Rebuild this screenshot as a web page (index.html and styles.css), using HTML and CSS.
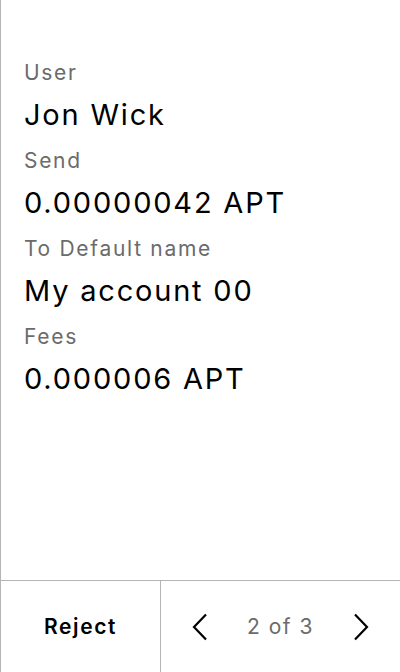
FILE: index.html
```html
<!DOCTYPE html>
<html>
<head>
<meta charset="utf-8">
<link rel="stylesheet" href="styles.css">
</head>
<body>
<div class="screen">
  <main class="fields">
    <div class="field">
      <div class="label">User</div>
      <div class="value">Jon Wick</div>
    </div>
    <div class="field">
      <div class="label">Send</div>
      <div class="value">0.00000042 APT</div>
    </div>
    <div class="field">
      <div class="label">To Default name</div>
      <div class="value">My account 00</div>
    </div>
    <div class="field">
      <div class="label">Fees</div>
      <div class="value">0.000006 APT</div>
    </div>
  </main>
  <footer class="footer">
    <div class="reject">Reject</div>
    <div class="pager">
      <svg class="chev" width="16" height="28" viewBox="0 0 16 28"><path d="M14 1.5 L2 14 L14 26.5" fill="none" stroke="#000" stroke-width="2.2"/></svg>
      <span class="count">2 of 3</span>
      <svg class="chev" width="16" height="28" viewBox="0 0 16 28"><path d="M2 1.5 L14 14 L2 26.5" fill="none" stroke="#000" stroke-width="2.2"/></svg>
    </div>
  </footer>
</div>
</body>
</html>
```
FILE: styles.css
```css
* { box-sizing: border-box; }
html, body { margin: 0; padding: 0; background: #fff; }
body {
  font-family: Inter, "Noto Sans", sans-serif;
  font-optical-sizing: none;
  color: #000;
}
.screen {
  width: 400px;
  height: 672px;
  border-left: 1px solid #b5b5b5;
  display: flex;
  flex-direction: column;
}
.fields {
  flex: 1;
  padding: 61px 0 0 23px;
  display: flex;
  flex-direction: column;
  gap: 17px;
}
.label {
  font-size: 21px;
  line-height: 24px;
  letter-spacing: 1.7px;
  color: #6b6b6b;
  margin-bottom: 13px;
}
.value {
  font-size: 29px;
  line-height: 34px;
  letter-spacing: 1.8px;
  color: #000;
}
.footer {
  height: 92px;
  border-top: 1px solid #b5b5b5;
  display: grid;
  grid-template-columns: 160px 1fr;
}
.reject {
  border-right: 1px solid #b5b5b5;
  display: flex;
  align-items: center;
  justify-content: center;
  font-size: 21px;
  font-weight: 600;
  letter-spacing: 1.6px;
}
.pager {
  display: flex;
  align-items: center;
  justify-content: space-between;
  padding: 0 31px 0 31px;
}
.count {
  font-size: 21px;
  letter-spacing: 1.5px;
  color: #6b6b6b;
}
.chev { display: block; }
```
